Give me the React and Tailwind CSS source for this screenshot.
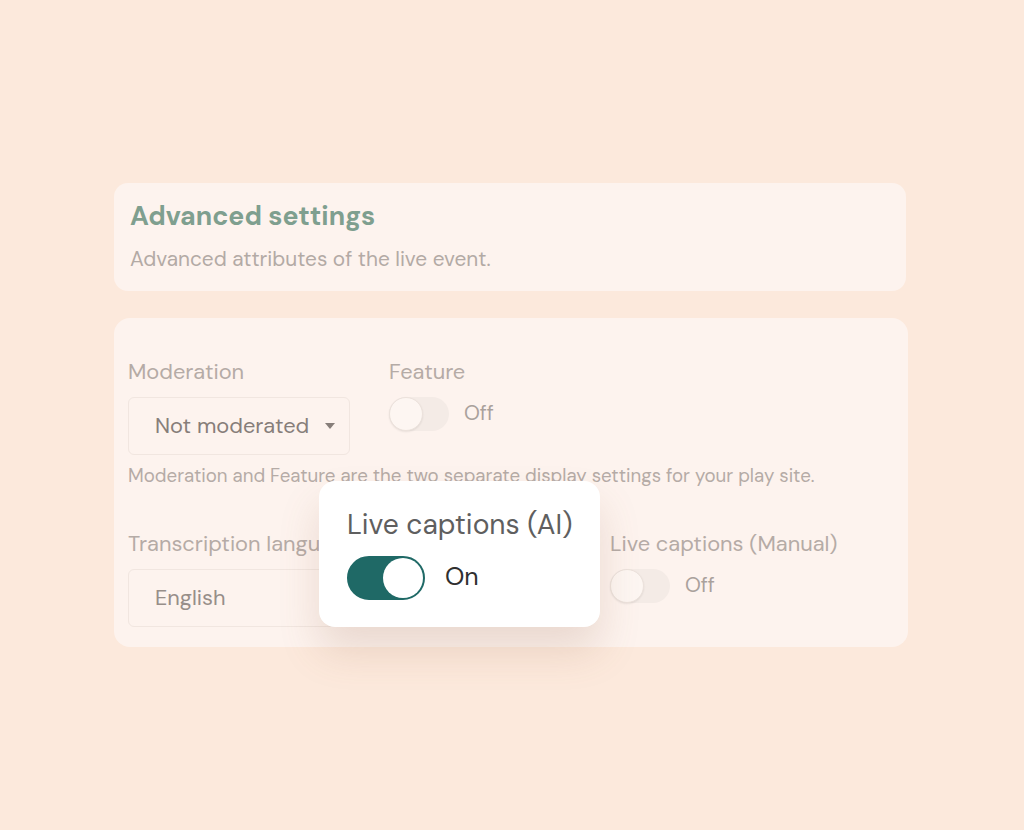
import React from "react";

function Toggle({ big = false }) {
  if (big) {
    return (
      <div className="relative w-[78px] h-[44px] rounded-full bg-[#1f6966] border-2 border-[#1f6966]">
        <div className="absolute right-0 top-0 w-[40px] h-[40px] rounded-full bg-white" />
      </div>
    );
  }
  return (
    <div className="relative w-[60px] h-[34px] rounded-full bg-[#f4ebe6]">
      <div className="absolute left-0 top-0 w-[34px] h-[34px] rounded-full bg-[#fdf6f2] border border-[#ece2dc] shadow-[0_1px_2px_rgba(0,0,0,0.08)]" />
    </div>
  );
}

export default function App() {
  const font = { fontFamily: "'DM Sans', Inter, 'Noto Sans', sans-serif" };
  return (
    <div className="w-[1024px] h-[830px] bg-[#fce9dc] relative overflow-hidden" style={font}>
      <div className="pt-[183px] pl-[114px] flex flex-col gap-[27px] w-[908px]">
        <div className="w-[792px] h-[108px] rounded-[14px] bg-[#fdf3ee] px-[16px] pt-[16px] flex flex-col">
          <div className="text-[26.7px] leading-[34px] font-bold text-[#7f9f8f]">Advanced settings</div>
          <div className="mt-[13px] text-[20.8px] leading-[26px] text-[#b3aaa5]">Advanced attributes of the live event.</div>
        </div>
        <div className="w-[794px] h-[329px] rounded-[16px] bg-[#fdf3ee] pl-[14px] pt-[40px] flex flex-col">
          <div className="flex">
            <div className="w-[261px] flex flex-col">
              <div className="text-[21.8px] leading-[28px] text-[#b5aba6]">Moderation</div>
              <div className="mt-[11px] w-[222px] h-[58px] rounded-[6px] border border-[#f1e6e0] flex items-center pl-[26px] pr-[14px]">
                <span className="text-[21.8px] text-[#877e7a] flex-1">Not moderated</span>
                <svg width="10" height="6" viewBox="0 0 10 6"><path d="M0 0 L10 0 L5 6 Z" fill="#877e7a" /></svg>
              </div>
            </div>
            <div className="flex flex-col">
              <div className="text-[21.8px] leading-[28px] text-[#b5aba6]">Feature</div>
              <div className="mt-[11px] flex items-center gap-[15px]">
                <Toggle />
                <span className="text-[20.5px] text-[#aaa19c] -mt-[2px]">Off</span>
              </div>
            </div>
          </div>
          <div className="mt-[9px] text-[18.7px] leading-[24px] text-[#b5aba6] whitespace-nowrap">
            Moderation and Feature are the two separate display settings for your play site.
          </div>
          <div className="mt-[42px] flex">
            <div className="w-[482px] flex flex-col">
              <div className="text-[21.8px] leading-[28px] text-[#b5aba6] whitespace-nowrap">Transcription language</div>
              <div className="mt-[11px] w-[240px] h-[58px] rounded-[6px] border border-[#f1e6e0] flex items-center pl-[26px]">
                <span className="text-[21.8px] text-[#978e89]">English</span>
              </div>
            </div>
            <div className="flex flex-col">
              <div className="text-[21.8px] leading-[28px] text-[#b5aba6] whitespace-nowrap">Live captions (Manual)</div>
              <div className="mt-[11px] flex items-center gap-[15px]">
                <Toggle />
                <span className="text-[20.5px] text-[#aaa19c] -mt-[2px]">Off</span>
              </div>
            </div>
          </div>
        </div>
      </div>

      <div className="absolute left-[319px] top-[481px] w-[281px] h-[146px] rounded-[16px] bg-white pl-[28px] pt-[27px] shadow-[0_24px_40px_rgba(150,100,70,0.18)] flex flex-col">
        <div className="text-[28.2px] leading-[34px] text-[#5f5f5f] whitespace-nowrap">Live captions (AI)</div>
        <div className="mt-[14px] flex items-center gap-[20px]">
          <Toggle big />
          <span className="text-[25px] text-[#2f2f2f] -mt-[2px]">On</span>
        </div>
      </div>
    </div>
  );
}
